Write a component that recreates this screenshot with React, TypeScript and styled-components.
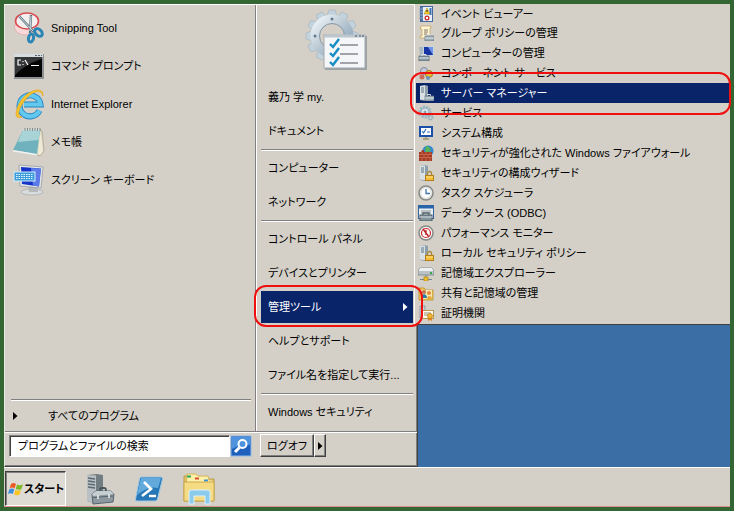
import React from "react";
import styled, { createGlobalStyle, css } from "styled-components";

const Global = createGlobalStyle`
  *, *::before, *::after { box-sizing: border-box; }
  body { margin: 0; background: #336633; }
  body, button, input {
    font-family: "Liberation Sans", "Noto Sans CJK JP", sans-serif;
    font-size: 11px;
    line-height: 16px;
    color: #000;
    font-feature-settings: "palt";
  }
  ul { list-style: none; margin: 0; padding: 0; }
  svg { display: block; flex: none; }
`;

const Screen = styled.div`
  display: flex;
  flex-direction: column;
  min-height: 100vh;
  border: 4px solid #336633;
  background: #3a6ea5;
`;

const Desktop = styled.main`
  position: relative;
  flex: 1;
  display: flex;
  align-items: stretch;
`;

const StartMenu = styled.section`
  display: flex;
  flex-direction: column;
  width: 414px;
  background: #d4d0c8;
  border-top: 1px solid #fff;
  border-left: 1px solid #e9e7e2;
  border-right: 1px solid #404040;
  border-bottom: 1px solid #404040;
  box-shadow: inset -1px -1px 0 #808080;
`;

const Columns = styled.div`
  flex: 1;
  display: flex;
`;

const Programs = styled.div`
  flex: none;
  display: flex;
  flex-direction: column;
  width: 251px;
  padding: 4px 4px 0 6px;
  border-right: 1px solid #808080;
`;

const Places = styled.div`
  flex: 1;
  display: flex;
  flex-direction: column;
  min-width: 0;
  padding: 3px 4px 0 4px;
  border-left: 1px solid #fff;
`;

const Item = styled.button`
  display: flex;
  align-items: center;
  width: 100%;
  border: 0;
  background: none;
  text-align: left;
  white-space: nowrap;
`;

const ProgramItem = styled(Item)`
  height: 38px;
  gap: 6px;
  padding: 0 2px;
`;

const AllPrograms = styled(Item)`
  height: 30px;
  gap: 30px;
  padding: 0 2px;
`;

const Spacer = styled.div`
  flex: 1;
`;

const Rule = styled.hr`
  width: 100%;
  height: 2px;
  margin: 1px 0 0;
  border: 0;
  border-top: 1px solid #808080;
  border-bottom: 1px solid #fff;
`;

const UserPicture = styled.div`
  display: flex;
  justify-content: center;
  height: 72px;
`;

const ring = css`
  position: relative;
  &::after {
    content: "";
    position: absolute;
    border: 2px solid #f00f0f;
    border-radius: 12px;
    pointer-events: none;
    z-index: 5;
  }
`;

const PlaceItem = styled(Item)<{ $open?: boolean }>`
  flex: none;
  justify-content: space-between;
  height: 32px;
  margin: 1px 0;
  padding: 0 5px 0 7px;
  ${(p) =>
    p.$open &&
    css`
      background: #0a246a;
      color: #fff;
      ${ring}
      &::after { inset: -6px -10px -4px -7px; }
    `}
`;

const MenuFooter = styled.div`
  display: flex;
  align-items: center;
  gap: 8px;
  height: 35px;
  padding: 0 4px 7px;
  border-top: 1px solid #808080;
  box-shadow: inset 0 1px 0 #fff;
`;

const SearchForm = styled.form`
  display: flex;
  align-items: center;
  width: 243px;
`;

const SearchBox = styled.input`
  flex: 1;
  min-width: 0;
  height: 22px;
  padding: 0 8px;
  background: #fff;
  border: 1px solid #808080;
  border-right-color: #fff;
  border-bottom-color: #fff;
  box-shadow: inset 1px 1px 0 #404040;
  border-radius: 0;
  &::placeholder { color: #000; opacity: 1; }
`;

const SearchButton = styled.button`
  display: flex;
  padding: 0;
  border: 0;
  background: none;
`;

const LogoffGroup = styled.div`
  display: flex;
`;

const RaisedButton = styled.button<{ $narrow?: boolean }>`
  display: flex;
  align-items: center;
  justify-content: center;
  width: ${(p) => (p.$narrow ? "12px" : "54px")};
  height: 23px;
  padding: 0;
  background: #d4d0c8;
  border: 1px solid #fff;
  border-right-color: #404040;
  border-bottom-color: #404040;
  box-shadow: inset -1px -1px 0 #808080;
`;

const Flyout = styled.ul`
  position: absolute;
  z-index: 2;
  top: 0;
  left: 410px;
  right: 0;
  && { padding: 0 0 1px 1px; }
  background: #d4d0c8;
  border-left: 1px solid #fff;
  border-bottom: 1px solid #404040;
`;

const FlyoutRow = styled.li`
  height: 20px;
  &:first-child { height: 19px; }
`;

const FlyoutItem = styled(Item)<{ $selected?: boolean }>`
  height: 100%;
  gap: 7px;
  padding: 0 2px;
  ${(p) =>
    p.$selected &&
    css`
      background: #0a246a;
      color: #fff;
      ${ring}
      &::after { inset: -11px -1px -12px -6px; }
    `}
`;

const Taskbar = styled.footer`
  display: flex;
  align-items: stretch;
  gap: 16px;
  height: 40px;
  padding: 3px 1px 0;
  background: #d4d0c8;
  border-top: 1px solid #fff;
  border-bottom: 1px solid #d9908a;
`;

const StartButton = styled.button`
  display: flex;
  align-items: center;
  width: 61px;
  padding: 0 2px;
  background: #dedbd5;
  border: 1px solid #404040;
  border-right-color: #fff;
  border-bottom-color: #fff;
  box-shadow: inset 1px 1px 0 #808080;
  font-weight: 700;
  white-space: nowrap;
`;

const TaskButton = styled.button`
  display: flex;
  align-items: center;
  justify-content: center;
  width: 34px;
  padding: 0;
  border: 0;
  background: none;
`;

const Arrow = () => (
  <svg width="5" height="8" viewBox="0 0 5 8" fill="currentColor">
    <path d="M0 0l4.500 4L0 8z" />
  </svg>
);

/* ---------- large icons ---------- */

const Big = ({ children }: { children: React.ReactNode }) => (
  <svg width="32" height="32" viewBox="0 0 32 32">{children}</svg>
);

const SnippingIcon = () => (
  <Big>
    <ellipse cx="12.500" cy="15" rx="11" ry="8" fill="#f8dada" stroke="#e3b0b0" />
    <ellipse cx="14" cy="9" rx="11.500" ry="8" fill="#f3f0ef" stroke="#d94b51" strokeWidth="1.600" />
    <path d="M6 4l15 16M18 3l-1 18" stroke="#5e7480" strokeWidth="2.400" />
    <path d="M6 4l14 15M18 4l-1 15" stroke="#cdd9df" strokeWidth="1" />
    <ellipse cx="25.500" cy="20.500" rx="4.500" ry="3" transform="rotate(45 25.500 20.500)" fill="none" stroke="#2c86b5" strokeWidth="3" />
    <ellipse cx="18" cy="26" rx="2.500" ry="4" transform="rotate(14 18 26)" fill="none" stroke="#2c86b5" strokeWidth="3" />
  </Big>
);

const PromptIcon = () => (
  <Big>
    <rect x="1" y="4" width="30" height="25" fill="#8d9193" />
    <rect x="1" y="4" width="29" height="3" fill="#d5dde0" />
    <path d="M22 5.500h2M25 5.500h2M28 5.500h1" stroke="#5b6468" />
    <rect x="2" y="7" width="27" height="20" fill="#050505" />
    <path d="M2 7h27v2C18 12 10 17 2 25z" fill="#343638" />
    <path d="M8 10H5v5h3M10 11v1M10 14v1M12 10l3 5M18 15.500h8" stroke="#fff" strokeWidth="1.200" fill="none" />
  </Big>
);

const ExplorerIcon = () => (
  <Big>
    <path d="M26.500 22.500a10.500 10.500 0 1 1 1-6H11" fill="none" stroke="#2384c3" strokeWidth="6" />
    <path d="M26.500 22.500a10.500 10.500 0 1 1 1-6H11" fill="none" stroke="#62c8ee" strokeWidth="4.200" />
    <path d="M30 8C31-3 14 2 7 14c-6 11-5 18 2 15-5 0-4-7 1-14C16 5 28-1 30 8z" fill="#f6c52d" stroke="#e6a51c" strokeWidth=".7" />
  </Big>
);

const NotepadIcon = () => (
  <Big>
    <path d="M26 4l3 1 2 20-4 5-7-3z" fill="#dedac2" stroke="#a9a690" strokeWidth=".8" />
    <path d="M10 4h17l-3 24L0 24z" fill="#6fb2bd" />
    <path d="M10 4h17l-1.500 10L5 16z" fill="#a8d4d8" />
    <path d="M0 24l24 4v1.500L0 25.500z" fill="#eef3f1" />
    <path d="M10 4h17" stroke="#d9e9ea" />
    <path d="M12 2v3M14.500 2v3M17 2v3M19.500 2v3M22 2v3M24.500 2v3M27 2v3" stroke="#7d8b8b" />
    <path d="M25 28l2.500-22L30 25l-3 4z" fill="#eeead8" />
  </Big>
);

const KeyboardIcon = () => (
  <Big>
    <ellipse cx="19" cy="28" rx="11" ry="3" fill="#d9dcdd" stroke="#a8abac" strokeWidth=".7" />
    <path d="M15 22h9l1 6h-9z" fill="#b5b9bb" />
    <path d="M6 1l24 2-2 21L7 22z" fill="#e4e7e8" stroke="#8c9499" strokeWidth=".7" />
    <path d="M8 3l20 1.500-2 18L9 20z" fill="#1634c7" />
    <path d="M18 4l10 .5-2 18-6-1z" fill="#6f8df0" opacity=".8" />
    <rect x="1" y="8" width="21" height="9" fill="#3d9ddb" stroke="#d5eefa" />
    <path d="M3 10.500h17M3 12.500h17M3 14.500h17" stroke="#e5f6fd" strokeDasharray="1.500 1" />
  </Big>
);

const teeth = Array.from({ length: 12 }, (_, i) => i * 30);

const AdminToolsPicture = () => (
  <svg width="64" height="64" viewBox="0 0 64 64">
    <defs>
      <linearGradient id="gear" x1="0" y1="0" x2="1" y2="1">
        <stop offset="0" stopColor="#edf4f8" />
        <stop offset=".5" stopColor="#b7c6d2" />
        <stop offset="1" stopColor="#7f9db5" />
      </linearGradient>
    </defs>
    {teeth.map((a) => (
      <path key={a} d="M24 2h6l2 6h-10z" transform={`rotate(${a} 27 28)`} fill="#c3d2dc" stroke="#9fb2bf" strokeWidth=".6" />
    ))}
    <circle cx="27" cy="28" r="17" fill="none" stroke="url(#gear)" strokeWidth="9" />
    <circle cx="27" cy="28" r="12.500" fill="none" stroke="#8597a6" />
    <circle cx="27" cy="11" r="1.500" fill="#64788a" />
    <circle cx="10" cy="28" r="1.500" fill="#64788a" />
    <rect x="20" y="28" width="42" height="34" fill="#9ba1a5" />
    <rect x="19" y="27" width="41" height="33" fill="#f5f6f7" stroke="#a3a9ad" />
    <path d="M20 28h40" stroke="#bcc7cf" strokeWidth="3" />
    <path d="M50 28h2M54 28h2M57 28h2" stroke="#4d565c" />
    <path d="M35 37h18M35 46h18M35 55h18" stroke="#858b90" strokeWidth="1.600" />
    <path d="M25 36l3 3 6-8M25 45l3 3 6-8M25 54l3 3 6-8" fill="none" stroke="#168bc4" strokeWidth="2.400" />
  </svg>
);

/* ---------- 16px icons ---------- */

const Small = ({ children }: { children: React.ReactNode }) => (
  <svg width="16" height="16" viewBox="0 0 16 16">{children}</svg>
);

const Server = () => (
  <>
    <path d="M2 1l5-1 3 1v13l-3 2-5-1z" fill="#8ea0ac" />
    <path d="M2 1l5-.5V15l-5-.5z" fill="#d9e1e5" />
    <path d="M3 3h3M3 5h3M3 7h3" stroke="#5e7380" />
  </>
);

const Toolbox = () => (
  <>
    <path d="M9.500 11V9.500h3V11" fill="none" stroke="#d5dee2" />
    <rect x="7" y="11" width="9" height="5" fill="#9eaeb8" stroke="#62737d" strokeWidth=".7" />
    <path d="M7 13h9" stroke="#dde5e8" />
  </>
);

const EventIcon = () => (
  <Small>
    <rect x="2.500" y=".5" width="12" height="15" fill="#e9f1fb" stroke="#46689b" />
    <path d="M3 1h2v14H3z" fill="#5277aa" />
    <path d="M1 3h4M1 6h4M1 9h4M1 12h4" stroke="#92a8c5" />
    <path d="M12.500 2v7" stroke="#3b70bd" strokeWidth="2" />
    <path d="M6 8l3-6 3 6z" fill="#f7cf27" stroke="#9d7d10" strokeWidth=".5" />
    <path d="M9 4v2" stroke="#222" />
    <circle cx="9" cy="12" r="2.500" fill="#cc3231" />
    <path d="M8 11l2 2M10 11l-2 2" stroke="#fff" />
  </Small>
);

const PolicyIcon = () => (
  <Small>
    <path d="M3 1h10v2h-1v10H2v-2h2V4H2z" fill="#fff6d5" stroke="#c6a565" strokeWidth=".8" />
    <path d="M6 5h4M6 7h4M6 9h3" stroke="#7e7560" />
    <Toolbox />
  </Small>
);

const ComputerIcon = () => (
  <Small>
    <rect x="5.500" y="1.500" width="10" height="9" fill="#1836a3" stroke="#c8d3db" />
    <path d="M10 2h5v8z" fill="#6f94e8" />
    <path d="M1 2h4v8H2z" fill="#aab8c1" />
    <rect x="1" y="11" width="10" height="5" fill="#8a9aa4" stroke="#506069" strokeWidth=".7" />
    <path d="M4 11V9.500h4V11M1 13h10" stroke="#dfe7ea" fill="none" />
  </Small>
);

const ComponentIcon = () => (
  <Small>
    <circle cx="6" cy="6" r="3.500" fill="#c4cad9" stroke="#7b86a2" />
    <circle cx="11" cy="9" r="3.500" fill="#e9bb35" stroke="#a87819" />
    <circle cx="4" cy="12" r="2.500" fill="#c96d5b" />
    <circle cx="10" cy="13" r="2" fill="#6a94bd" />
  </Small>
);

const ServerManagerIcon = () => (
  <Small><Server /><Toolbox /></Small>
);

const ServicesIcon = () => (
  <Small>
    <circle cx="7" cy="7" r="5" fill="none" stroke="#98b5c5" strokeWidth="3" strokeDasharray="2 1" />
    <circle cx="7" cy="7" r="4" fill="#dce6ea" stroke="#91aebe" />
    <circle cx="7" cy="7" r="1.500" fill="#8aa5b5" />
    <circle cx="12.500" cy="12.500" r="2" fill="none" stroke="#8eacbc" strokeWidth="2" strokeDasharray="1 .6" />
  </Small>
);

const SysConfigIcon = () => (
  <Small>
    <path d="M5 14h6M8 12v3" stroke="#a99f7d" strokeWidth="2" />
    <rect x="1" y="1" width="14" height="11" fill="#1c4fa7" />
    <rect x="3" y="3" width="10" height="7" fill="#fff" />
    <path d="M4 6l1.500 2L8 4M9 7h3" stroke="#2a70bb" strokeWidth="1.200" fill="none" />
  </Small>
);

const FirewallIcon = () => (
  <Small>
    <circle cx="10" cy="6" r="5.500" fill="#3386d0" />
    <path d="M8 1l3 1 2 3-3 3-3-2z" fill="#58b553" />
    <path d="M1 7h2l1-2h2v2h8v9H1z" fill="#a53b24" />
    <path d="M1 9.500h13M1 12.500h13M4 7v3M8 7v3M12 7v3M6 10v3M10 10v3M4 13v3M8 13v3M12 13v3" stroke="#cf7857" strokeWidth=".7" />
  </Small>
);

const SecurityIcon = () => (
  <Small>
    <Server />
    <path d="M9.500 11V8.500a2 2 0 0 1 4 0V11" fill="none" stroke="#a68a41" strokeWidth="1.300" />
    <rect x="7.500" y="10.500" width="8" height="5" fill="#f4bd33" stroke="#b57e15" />
    <path d="M8 12h7" stroke="#ffe389" />
  </Small>
);

const ClockIcon = () => (
  <Small>
    <circle cx="8" cy="8" r="7" fill="#f1f2ee" stroke="#858986" strokeWidth="1.500" />
    <circle cx="8" cy="8" r="5.200" fill="#fff" stroke="#c5c9c8" strokeWidth=".6" />
    <path d="M8 4v4.500h4" fill="none" stroke="#3e75ab" strokeWidth="1.300" />
  </Small>
);

const OdbcIcon = () => (
  <Small>
    <rect x=".5" y=".5" width="15" height="13" fill="#e8edf0" stroke="#34659d" />
    <path d="M1 2h14" stroke="#2765ae" strokeWidth="3" />
    <path d="M3 6h10M3 8h10" stroke="#8b989f" />
    <path d="M5 10V8h6v2" fill="none" stroke="#56656d" strokeWidth="1.300" />
    <rect x="2" y="10" width="12" height="6" fill="#84949d" stroke="#4d5c64" />
    <path d="M2 12h12" stroke="#d2dce0" />
  </Small>
);

const PerformanceIcon = () => (
  <Small>
    <circle cx="8" cy="8" r="7" fill="#fafafa" stroke="#858986" strokeWidth="1.500" />
    <circle cx="8" cy="8" r="4.500" fill="none" stroke="#cc2b2b" strokeWidth="1.200" />
    <path d="M5 4l6 8M8 5v5" stroke="#ba2026" strokeWidth="1.300" />
  </Small>
);

const StorageIcon = () => (
  <Small>
    <path d="M2 3h12l2 3v4H0V6z" fill="#b9c1c5" stroke="#75838b" strokeWidth=".8" />
    <path d="M2 3h12l1.500 3H.5z" fill="#edf0f1" />
    <path d="M12 8h2" stroke="#36a84a" strokeWidth="2" />
    <path d="M8 10v4M2 14.500h12" stroke="#718591" />
    <rect x="6" y="12" width="4" height="4" fill="#edbd2d" stroke="#b3830e" strokeWidth=".7" />
  </Small>
);

const SharedIcon = () => (
  <Small>
    <path d="M1 3h5l2 2h7v10H1z" fill="#efc754" stroke="#b98e29" strokeWidth=".8" />
    <rect x="3" y="5" width="11" height="9" fill="#f8e7ac" />
    <circle cx="6" cy="7" r="2" fill="#bd7355" />
    <circle cx="11" cy="8" r="2" fill="#e08a3c" />
    <path d="M3 13c0-5 6-5 6 0z" fill="#277da8" />
    <path d="M9 14c0-4 5-4 5 0z" fill="#e2a83c" />
  </Small>
);

const CertificateIcon = () => (
  <Small>
    <path d="M2 1h5v12H2z" fill="#c7d1d7" stroke="#788890" strokeWidth=".7" />
    <rect x="4.500" y="5.500" width="11" height="8" fill="#fffbed" stroke="#b8994f" />
    <path d="M6 8h7M6 10h4" stroke="#978f7b" />
    <path d="M10 11v5l2-1 2 1v-5" fill="#dc862a" />
    <circle cx="12" cy="11" r="2.500" fill="#f1b92f" stroke="#bb7c1d" strokeWidth=".7" />
  </Small>
);

/* ---------- search and task bar icons ---------- */

const SearchIcon = () => (
  <svg width="22" height="22" viewBox="0 0 22 22">
    <rect x="1" y="1" width="20" height="20" fill="#1f60bd" stroke="#90b7e6" />
    <path d="M2 2h18v8c-8-1-12 1-18 4z" fill="#4f93de" />
    <path d="M9.500 12.500L5 17" stroke="#fff" strokeWidth="3" />
    <circle cx="12.500" cy="9" r="4" fill="#4d94dd" stroke="#fff" strokeWidth="2" />
  </svg>
);

const WindowsIcon = () => (
  <svg width="16" height="16" viewBox="0 0 16 16">
    <path d="M3 3c2-1.500 3.500-1.500 5 0L6.500 7.500C5 6.200 3 6.200 1.500 7.500z" fill="#ee5a24" />
    <path d="M9 3.500c2 1 4 1 6-.5L13.500 8c-2 1.200-4 1-5.800 0z" fill="#7fba28" />
    <path d="M1.200 8.500c2-1.300 3.500-1.300 5 0L4.800 13C3.300 12 1.500 12 0 13z" fill="#3c8fdc" />
    <path d="M7.300 9c2 1 4 1 5.800 0l-1.500 4.500c-2 1.200-3.800 1-5.600 0z" fill="#f7c423" />
  </svg>
);

const TaskServerIcon = () => (
  <svg width="32" height="34" viewBox="0 0 32 34">
    <path d="M4 3l10-1 6 1v24l-6 5-10-3z" fill="#727d82" />
    <path d="M4 3l9 .5v28L4 29z" fill="#b9c1c4" />
    <path d="M5 6l7 1M5 9l7 1M5 12l7 1M5 15l7 1" stroke="#596a72" strokeWidth="1.300" />
    <path d="M17 20v-2q0-2 2-2h2q2 0 2 2v2" fill="none" stroke="#4a565d" strokeWidth="1.800" />
    <path d="M9 22l4-3h15l3 3-1 8-20 2z" fill="#8d999f" stroke="#56656e" />
    <path d="M9 22l4-3h15l3 3-21 2z" fill="#c6ced2" />
    <path d="M10 25.500l20-1.500" stroke="#56656e" />
    <path d="M15 23v4M26 22v4" stroke="#eef1f2" strokeWidth="1.500" />
  </svg>
);

const PowerShellIcon = () => (
  <svg width="30" height="28" viewBox="0 0 30 28">
    <path d="M7 2h20q2 0 1.500 2l-5 20q-.5 2-2.500 2H3q-2 0-1.500-2l4-20Q6 2 7 2z" fill="#2878b7" stroke="#9fc9e6" />
    <path d="M7 3h20l-3 10C16 11 10 15 3 20z" fill="#62aadc" />
    <path d="M10 7l7 7-9 7" fill="none" stroke="#fff" strokeWidth="2.600" />
    <path d="M15 21h7" stroke="#fff" strokeWidth="2.400" />
  </svg>
);

const FolderIcon = () => (
  <svg width="34" height="32" viewBox="0 0 34 32">
    <path d="M2 3h10l2 3h18v22H2z" fill="#e3c261" stroke="#b99b48" />
    <path d="M5 1h9l2 2h10l1 4h4v20H3z" fill="#fff0a7" stroke="#d2b45c" />
    <path d="M5 3.500h4" stroke="#28a55c" strokeWidth="2" />
    <path d="M13 5.500h4" stroke="#d94c35" strokeWidth="2" />
    <path d="M22 7.500h4" stroke="#3a91d0" strokeWidth="2" />
    <path d="M2 9h30v19H2z" fill="#f5db83" stroke="#cba94c" />
    <path d="M7 31V19q0-2 2-2h17q2 0 2 2v12h-5v-8H12v8z" fill="#8ccbeb" stroke="#daf1fc" />
  </svg>
);

const programs = [
  { label: "Snipping Tool", icon: <SnippingIcon /> },
  { label: "コマンド プロンプト", icon: <PromptIcon /> },
  { label: "Internet Explorer", icon: <ExplorerIcon /> },
  { label: "メモ帳", icon: <NotepadIcon /> },
  { label: "スクリーン キーボード", icon: <KeyboardIcon /> },
];

const places = [
  ["義乃 学 my.", "ドキュメント"],
  ["コンピューター", "ネットワーク"],
  ["コントロール パネル", "デバイスとプリンター", "管理ツール", "ヘルプとサポート", "ファイル名を指定して実行..."],
  ["Windows セキュリティ"],
];

const tools = [
  { label: "イベント ビューアー", icon: <EventIcon /> },
  { label: "グループ ポリシーの管理", icon: <PolicyIcon /> },
  { label: "コンピューターの管理", icon: <ComputerIcon /> },
  { label: "コンポーネント サービス", icon: <ComponentIcon /> },
  { label: "サーバー マネージャー", icon: <ServerManagerIcon />, selected: true },
  { label: "サービス", icon: <ServicesIcon /> },
  { label: "システム構成", icon: <SysConfigIcon /> },
  { label: "セキュリティが強化された Windows ファイアウォール", icon: <FirewallIcon /> },
  { label: "セキュリティの構成ウィザード", icon: <SecurityIcon /> },
  { label: "タスク スケジューラ", icon: <ClockIcon /> },
  { label: "データ ソース (ODBC)", icon: <OdbcIcon /> },
  { label: "パフォーマンス モニター", icon: <PerformanceIcon /> },
  { label: "ローカル セキュリティ ポリシー", icon: <SecurityIcon /> },
  { label: "記憶域エクスプローラー", icon: <StorageIcon /> },
  { label: "共有と記憶域の管理", icon: <SharedIcon /> },
  { label: "証明機関", icon: <CertificateIcon /> },
];

export default function App() {
  return (
    <>
      <Global />
      <Screen lang="ja">
        <Desktop>
          <StartMenu>
            <Columns>
              <Programs>
                {programs.map((p) => (
                  <ProgramItem key={p.label}>{p.icon}{p.label}</ProgramItem>
                ))}
                <Spacer />
                <Rule />
                <AllPrograms><Arrow />すべてのプログラム</AllPrograms>
              </Programs>
              <Places>
                <UserPicture><AdminToolsPicture /></UserPicture>
                {places.map((group, i) => (
                  <React.Fragment key={group[0]}>
                    {i > 0 && <Rule />}
                    {group.map((label) => {
                      const open = label === "管理ツール";
                      return (
                        <PlaceItem key={label} $open={open}>
                          {label}
                          {open && <Arrow />}
                        </PlaceItem>
                      );
                    })}
                  </React.Fragment>
                ))}
              </Places>
            </Columns>
            <MenuFooter>
              <SearchForm onSubmit={(e) => e.preventDefault()}>
                <SearchBox type="text" aria-label="プログラムとファイルの検索" placeholder="プログラムとファイルの検索" />
                <SearchButton aria-label="検索"><SearchIcon /></SearchButton>
              </SearchForm>
              <LogoffGroup>
                <RaisedButton>ログオフ</RaisedButton>
                <RaisedButton $narrow aria-label="その他のオプション"><Arrow /></RaisedButton>
              </LogoffGroup>
            </MenuFooter>
          </StartMenu>
          <Flyout>
            {tools.map((t) => (
              <FlyoutRow key={t.label}>
                <FlyoutItem $selected={t.selected}>{t.icon}{t.label}</FlyoutItem>
              </FlyoutRow>
            ))}
          </Flyout>
        </Desktop>
        <Taskbar>
          <StartButton><WindowsIcon />スタート</StartButton>
          <TaskButton aria-label="サーバー マネージャー"><TaskServerIcon /></TaskButton>
          <TaskButton aria-label="Windows PowerShell"><PowerShellIcon /></TaskButton>
          <TaskButton aria-label="エクスプローラー"><FolderIcon /></TaskButton>
        </Taskbar>
      </Screen>
    </>
  );
}
